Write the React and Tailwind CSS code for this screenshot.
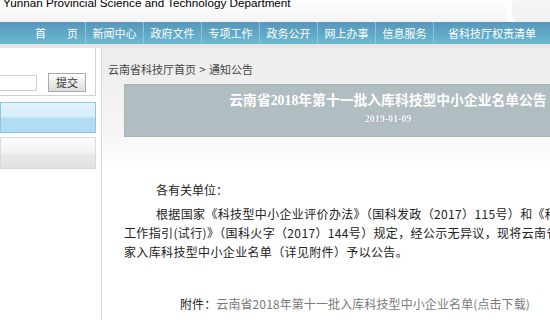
export default function App() {
  const nav = ["新闻中心", "政府文件", "专项工作", "政务公开", "网上办事", "信息服务"];
  return (
    <div className="w-[550px] h-[320px] overflow-hidden bg-white font-['Noto_Sans_CJK_SC',sans-serif] text-[#222]">
      {/* header */}
      <div className="relative h-[22px] overflow-hidden bg-[linear-gradient(#ffffff,#f4f4f4)]">
        <div className="-mt-[3px] pl-[3px] font-['Liberation_Sans',sans-serif] text-[11.7px] leading-[12px] text-black whitespace-nowrap">
          Yunnan Provincial Science and Technology Department
        </div>
        <div className="absolute right-[-30px] top-[-28px] w-[74px] h-[74px] rounded-full border-[6px] border-white/80 bg-[#ececec]/40" />
      </div>

      {/* nav */}
      <div className="flex h-[22px] items-center pl-[28px] bg-[linear-gradient(#5896bb,#61a9c6_55%,#6bbacf)] text-white text-[11px] whitespace-nowrap">
        <div className="flex w-[60px] h-full items-center justify-center gap-[21px] border-r border-[#8fc3d8]">
          <span>首</span>
          <span>页</span>
        </div>
        {nav.map((n) => (
          <div key={n} className="flex w-[60px] h-full items-center justify-center border-r border-[#8fc3d8]">
            {n}
          </div>
        ))}
        <div className="flex w-[120px] h-full items-center justify-center">省科技厅权责清单</div>
      </div>

      <div className="h-[4px] bg-[#e6e6e6]" />

      <div className="flex">
        {/* sidebar */}
        <div className="w-[101px] shrink-0">
          <div className="w-[96px] h-[48px] bg-white border-r border-b border-[#d2d2d2] pt-[25px]">
            <div className="flex h-[19px] items-center">
              <div className="w-[37px] h-[16px] border border-l-0 border-[#cfcfcf] bg-white" />
              <div className="ml-[11px] flex w-[38px] h-[19px] items-center justify-center border border-[#a9a9a9] bg-[linear-gradient(#ffffff,#e9e9e9_60%,#dcdcdc)] text-[11px] text-[#333]">
                提交
              </div>
            </div>
          </div>
          <div className="mt-[6px] w-[96px] h-[31px] border border-[#8cc6e6] bg-[linear-gradient(#e3f3fc,#d6eef9_48%,#b6ddf4_52%,#b0daf3)]" />
          <div className="mt-[4px] w-[96px] h-[32px] border border-[#dcdcdc] bg-[linear-gradient(#fcfcfc,#f4f4f4_45%,#e7e7e7_62%,#e2e2e2)]" />
        </div>

        {/* content */}
        <div className="flex-1 min-w-0 border-l border-[#d9d9d9] min-h-[280px] bg-[linear-gradient(#ececec,#f5f5f5_80px,#ffffff_120px)]">
          <div className="pl-[6px] pt-[13px] text-[11px] leading-[16px] text-[#444] whitespace-nowrap">
            云南省科技厅首页 <span className="mx-[1px]">&gt;</span> 通知公告
          </div>
          <div className="ml-[22px] mt-[7px] w-[528px] h-[53px] border border-[#a9b7ba] bg-[#b0bec1] pt-[6px] text-center text-white whitespace-nowrap">
            <div className="font-['Liberation_Serif','Noto_Sans_CJK_SC',serif] font-bold text-[13.8px] leading-[20px]">
              云南省2018年第十一批入库科技型中小企业名单公告
            </div>
            <div className="mt-[2px] font-['Liberation_Serif',serif] font-bold text-[10px] leading-[12px] [text-shadow:0_0_1px_#6a6f8a]">
              2019-01-09
            </div>
          </div>

          <div className="ml-[22px] mt-[43px] w-[500px] text-[12px]">
            <p className="indent-[32px] leading-[19px] whitespace-nowrap">各有关单位：</p>
            <p className="mt-[5px] leading-[19px] w-[440px] tracking-[0.35px]">
              <span className="block indent-[32px] whitespace-nowrap">根据国家《科技型中小企业评价办法》（国科发政（2017）115号）和《科技型中小企业评价</span>
              <span className="block whitespace-nowrap">工作指引(试行)》（国科火字（2017）144号）规定，经公示无异议，现将云南省2018年第十一批国</span>
              <span className="block whitespace-nowrap">家入库科技型中小企业名单（详见附件）予以公告。</span>
            </p>
            <p className="mt-[33px] pl-[56px] leading-[19px] whitespace-nowrap tracking-[0.1px]">
              附件：<span className="text-[#7a7a7a]">云南省2018年第十一批入库科技型中小企业名单(点击下载)</span>
            </p>
          </div>
        </div>
      </div>
    </div>
  );
}
